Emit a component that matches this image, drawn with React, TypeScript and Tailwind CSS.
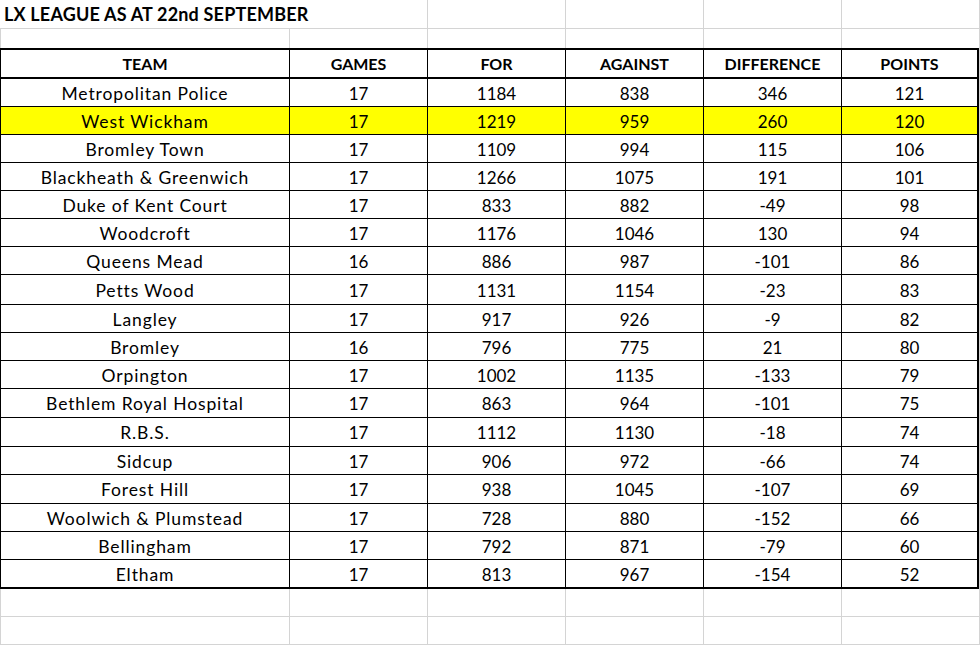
import React from 'react'

const teams = [
	['Metropolitan Police', '17', '1184', '838', '346', '121'],
	['West Wickham', '17', '1219', '959', '260', '120'],
	['Bromley Town', '17', '1109', '994', '115', '106'],
	['Blackheath & Greenwich', '17', '1266', '1075', '191', '101'],
	['Duke of Kent Court', '17', '833', '882', '-49', '98'],
	['Woodcroft', '17', '1176', '1046', '130', '94'],
	['Queens Mead', '16', '886', '987', '-101', '86'],
	['Petts Wood', '17', '1131', '1154', '-23', '83'],
	['Langley', '17', '917', '926', '-9', '82'],
	['Bromley', '16', '796', '775', '21', '80'],
	['Orpington', '17', '1002', '1135', '-133', '79'],
	['Bethlem Royal Hospital', '17', '863', '964', '-101', '75'],
	['R.B.S.', '17', '1112', '1130', '-18', '74'],
	['Sidcup', '17', '906', '972', '-66', '74'],
	['Forest Hill', '17', '938', '1045', '-107', '69'],
	['Woolwich & Plumstead', '17', '728', '880', '-152', '66'],
	['Bellingham', '17', '792', '871', '-79', '60'],
	['Eltham', '17', '813', '967', '-154', '52'],
]

// row heights as measured from the sheet (Excel rounds its zoomed rows unevenly)
const rowHeights = [
	'h-[28px]', 'h-[28px]', 'h-[28px]', 'h-[28px]', 'h-[28px]', 'h-[28px]',
	'h-[28px]', 'h-[30px]', 'h-[28px]', 'h-[28px]', 'h-[28px]', 'h-[29px]',
	'h-[29px]', 'h-[28px]', 'h-[29px]', 'h-[28px]', 'h-[28px]', 'h-[27px]',
]

const widths = ['w-[289px]', 'w-[138px]', 'w-[138px]', 'w-[138px]', 'w-[138px]', 'w-[135px]']

const headers = ['TEAM', 'GAMES', 'FOR', 'AGAINST', 'DIFFERENCE', 'POINTS']

function BlankRow({ height, border }: { height: string; border: boolean }) {
	return (
		<div className={`flex ${height} ${border ? 'border-b border-[#d4d4d4]' : ''}`}>
			<div className="w-px bg-[#d4d4d4]" />
			<div className="w-[289px] border-r border-[#d4d4d4]" />
			<div className="w-[138px] border-r border-[#d4d4d4]" />
			<div className="w-[138px] border-r border-[#d4d4d4]" />
			<div className="w-[138px] border-r border-[#d4d4d4]" />
			<div className="w-[138px] border-r border-[#d4d4d4]" />
			<div className="w-[138px] border-r border-[#d4d4d4]" />
		</div>
	)
}

export default function App() {
	return (
		<div
			className="h-[645px] w-[980px] overflow-hidden bg-white text-[17px] text-black"
			style={{ fontFamily: 'Lato, "Open Sans", sans-serif' }}
		>
			{/* title row */}
			<div className="flex h-[29px] border-b border-[#d4d4d4]">
				<div className="flex w-[428px] items-center border-r border-[#d4d4d4] pl-1 text-[18px] font-bold tracking-[0.01em] whitespace-nowrap">
					LX LEAGUE AS AT 22nd SEPTEMBER
				</div>
				<div className="w-[138px] border-r border-[#d4d4d4]" />
				<div className="w-[138px] border-r border-[#d4d4d4]" />
				<div className="w-[138px] border-r border-[#d4d4d4]" />
				<div className="w-[138px] border-r border-[#d4d4d4]" />
			</div>
			<BlankRow height="h-[19px]" border={false} />

			<div className="flex">
				<div className="w-[979px] border-t-2 border-r-2 border-b-2 border-l border-black">
					<div className="flex h-[29px] border-b-2 border-black text-[16px] font-bold">
						{headers.map((h, i) => (
							<div
								key={h}
								className={`${widths[i]} flex items-center justify-center pt-px ${i < 5 ? 'border-r border-black' : ''}`}
							>
								{h}
							</div>
						))}
					</div>
					{teams.map((row, r) => (
						<div
							key={row[0]}
							className={`flex ${rowHeights[r]} ${r < teams.length - 1 ? 'border-b border-black' : ''} ${r === 1 ? 'bg-[#ffff00]' : ''}`}
						>
							{row.map((cell, i) => (
								<div
									key={i}
									className={`${widths[i]} flex items-center justify-center whitespace-nowrap ${i === 0 ? 'pt-[3px] text-[17.5px] tracking-[0.05em]' : 'pt-[2px]'} ${i < 5 ? 'border-r border-black' : ''}`}
								>
									{cell}
								</div>
							))}
						</div>
					))}
				</div>
				<div className="w-px bg-[#d4d4d4]" />
			</div>

			<BlankRow height="h-[28px]" border />
			<BlankRow height="h-[28px]" border />
		</div>
	)
}
